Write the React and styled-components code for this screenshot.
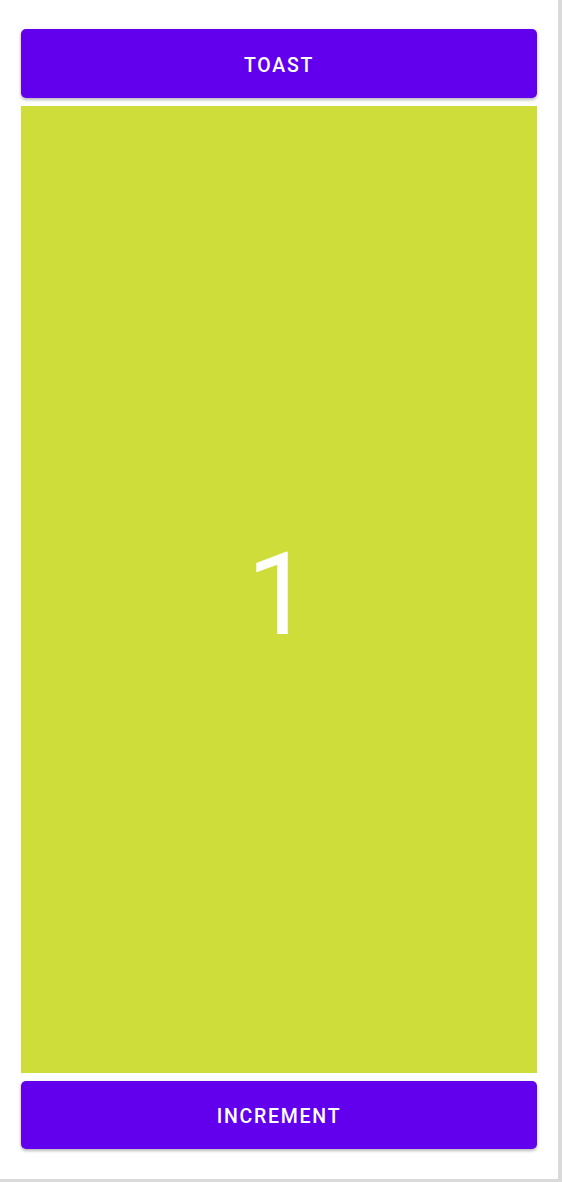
import React, {useState} from 'react';
import styled, {createGlobalStyle} from 'styled-components';

const GlobalStyle = createGlobalStyle`
    html, body {
        margin: 0;
        padding: 0;
        background: #ffffff;
    }
`;

const Screen = styled.div`
    box-sizing: border-box;
    width: 562px;
    height: 1182px;
    border-right: 4px solid #dadada;
    border-bottom: 3px solid #dadada;
    background: #ffffff;
    display: flex;
    flex-direction: column;
    gap: 8px;
    padding: 29px 21px 30px 21px;
    font-family: Roboto, "Liberation Sans", sans-serif;
`;

const ActionButton = styled.button`
    height: ${props => props.tall ? 69 : 68}px;
    flex: none;
    border: none;
    border-radius: 5px;
    padding: 3px 0 0 0;
    background: #6200ee;
    color: #ffffff;
    font-family: Roboto, "Liberation Sans", sans-serif;
    font-weight: 500;
    font-size: 19.5px;
    letter-spacing: 1.75px;
    text-transform: uppercase;
    box-shadow: 0 2px 3px rgba(0, 0, 0, 0.2), 0 1px 4px rgba(0, 0, 0, 0.12);
    cursor: pointer;
`;

const CounterPanel = styled.div`
    flex: 1;
    background: #cfdd3a;
    display: flex;
    align-items: center;
    justify-content: center;
    color: #ffffff;
    font-size: 115px;
    font-weight: 400;
    line-height: 1;
    padding-top: 10px;
`;

export default function App() {
    const [count, setCount] = useState(1);

    return (
        <>
            <GlobalStyle/>
            <Screen>
                <ActionButton tall onClick={() => {}}>Toast</ActionButton>
                <CounterPanel>{count}</CounterPanel>
                <ActionButton onClick={() => setCount(count + 1)}>Increment</ActionButton>
            </Screen>
        </>
    );
}
